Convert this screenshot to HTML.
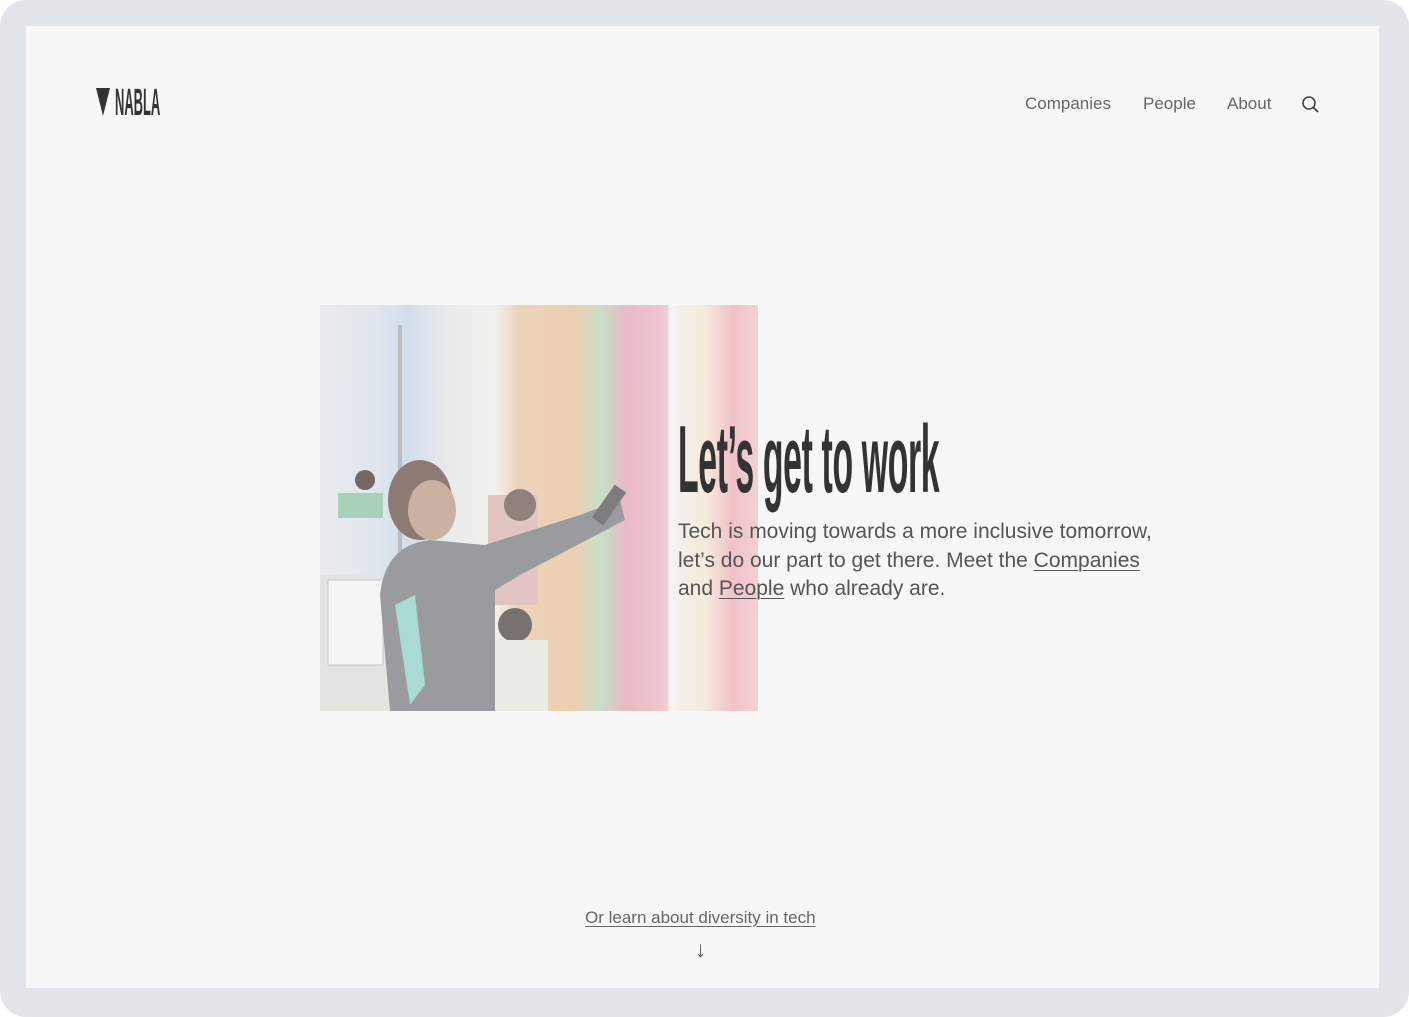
<!DOCTYPE html>
<html><head><meta charset="utf-8"><style>
*{margin:0;padding:0;box-sizing:border-box}
html,body{width:1409px;height:1017px;overflow:hidden;background:#fff;font-family:"Liberation Sans",sans-serif}
.frame{position:absolute;left:0;top:0;width:1409px;height:1017px;background:#e2e6ea;border-radius:26px}
.panel{position:absolute;left:26px;top:26px;width:1353px;height:962px;background:#f7f7f7}
.logo{position:absolute;left:96px;top:86px;height:34px}
.logo .tri{position:absolute;left:0;top:2px;width:0;height:0;border-left:7px solid transparent;border-right:7px solid transparent;border-top:28px solid #333}
.logo .txt{position:absolute;left:19px;top:-4px;font-size:38px;font-weight:bold;color:#333;transform:scaleX(.34);transform-origin:left top}
.nav{position:absolute;top:94px;font-size:17px;color:#666;font-weight:300}
.photo{position:absolute;left:320px;top:305px;width:438px;height:406px;overflow:hidden;
background:linear-gradient(90deg,#e4e8ee 0,#d9e1ea 12%,#c8d6e6 20%,#e6e8ea 30%,#f0efe9 40%,#e8c9a8 45%,#ebc198 58%,#b8d8b8 64%,#e6a5b5 70%,#ecb9c4 79%,#f4f0ee 80%,#f5e7d4 88%,#eeb1b8 94%,#f0c4c8 100%)}
.veil{position:absolute;left:0;top:0;width:438px;height:406px;background:rgba(247,247,247,.25)}
h1{position:absolute;left:678px;top:412px;font-size:96px;font-weight:bold;color:#333;transform:scaleX(.352);transform-origin:left top;white-space:nowrap;letter-spacing:-1px;line-height:1}
.body{position:absolute;left:678px;top:518px;font-size:21px;line-height:28.5px;color:#555;font-weight:300;width:500px}
.body u{text-decoration-thickness:1px;text-underline-offset:3px}
.more{position:absolute;left:585px;top:908px;font-size:17px;color:#666;text-decoration:underline;text-underline-offset:3px}
.arrow{position:absolute;left:695px;top:937px;font-size:22px;color:#555}
</style></head><body>
<div class="frame"></div>
<div class="panel"></div>
<div class="logo"><div class="tri"></div><div class="txt">NABLA</div></div>
<div class="nav" style="left:1025px">Companies</div>
<div class="nav" style="left:1143px">People</div>
<div class="nav" style="left:1227px">About</div>
<svg style="position:absolute;left:1301px;top:95px" width="20" height="20" viewBox="0 0 20 20"><circle cx="8" cy="8" r="6" fill="none" stroke="#444" stroke-width="1.6"/><line x1="12.5" y1="12.5" x2="17" y2="17" stroke="#444" stroke-width="1.8"/></svg>
<div class="photo">
<svg width="438" height="406" viewBox="0 0 438 406">
<rect x="0" y="270" width="75" height="136" fill="#dcdcd8"/>
<rect x="8" y="275" width="55" height="85" fill="#f4f4f2" stroke="#b8b8b8"/>
<rect x="18" y="188" width="45" height="25" fill="#8fc4a4"/>
<line x1="80" y1="20" x2="80" y2="260" stroke="#a8a8a8" stroke-width="4"/>
<rect x="168" y="190" width="50" height="110" fill="#d8b4b0"/>
<circle cx="200" cy="200" r="16" fill="#6d5a52"/>
<circle cx="195" cy="320" r="17" fill="#4e4440"/>
<rect x="168" y="335" width="60" height="71" fill="#e4e8de"/>
<path d="M60 290 Q65 240 110 235 L165 240 L260 210 L300 195 L305 215 L200 270 L175 285 L175 406 L70 406 Z" fill="#7a7c82"/>
<path d="M75 300 L95 290 L105 380 L90 400 Z" fill="#8fd2c8"/>
<ellipse cx="100" cy="195" rx="32" ry="40" fill="#6b5048"/>
<ellipse cx="112" cy="205" rx="24" ry="30" fill="#bd9a86"/>
<circle cx="45" cy="175" r="10" fill="#4a3a34"/>
<rect x="282" y="180" width="14" height="40" fill="#555" transform="rotate(35 289 200)"/>
</svg>
<div class="veil"></div>
</div>
<h1>Let’s get to work</h1>
<div class="body">Tech is moving towards a more inclusive tomorrow, let’s do our part to get there. Meet the <u>Companies</u> and <u>People</u> who already are.</div>
<div class="more">Or learn about diversity in tech</div>
<div class="arrow">↓</div>
</body></html>
